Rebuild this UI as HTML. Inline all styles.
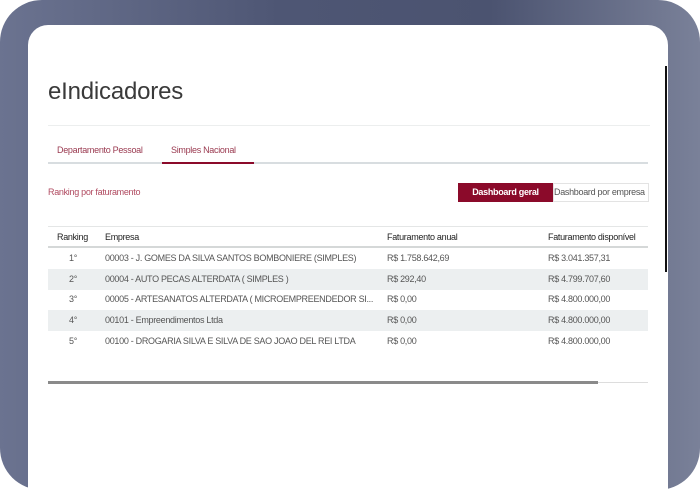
<!DOCTYPE html>
<html><head><style>
*{margin:0;padding:0;box-sizing:border-box}
html,body{width:700px;height:490px;overflow:hidden}
body{background:#fff;font-family:"Liberation Sans",sans-serif;position:relative}
.wrap{position:absolute;left:0;top:0;width:700px;height:490px;overflow:hidden}
.frame{position:absolute;left:0;top:0;width:700px;height:490px;border-radius:42px;background:linear-gradient(90deg,#6b7390 0%,#4e5674 40%,#4b5370 70%,#7a8199 100%)}
.card{position:absolute;left:28px;top:25px;width:640px;height:465px;background:#fff;border-radius:20px 20px 0 0}
.edge{position:absolute;left:665px;top:66px;width:2px;height:206px;background:#111}
.abs{position:absolute;white-space:nowrap;letter-spacing:-0.3px}
h1{position:absolute;left:48px;top:78px;font-size:24px;font-weight:normal;color:#3a3a3a;letter-spacing:-0.2px}
.sep{position:absolute;left:48px;top:125px;width:602px;height:1px;background:#eceeee}
.tab{font-size:9px;color:#9a3a50;top:145px}
.tabline{position:absolute;left:48px;top:162px;width:600px;height:2px;background:#d8dde0}
.tabact{position:absolute;left:162px;top:162px;width:92px;height:2px;background:#8b0a2a}
.btn1{position:absolute;left:458px;top:183px;width:95px;height:19px;background:#8b0a2a;color:#fff;font-size:9px;font-weight:bold;text-align:center;line-height:19px;letter-spacing:-0.3px}
.btn2{position:absolute;left:553px;top:183px;width:96px;height:19px;border:1px solid #e3e3e3;color:#555;font-size:9px;line-height:17px;overflow:hidden;white-space:nowrap;letter-spacing:-0.3px}
.t{font-size:9px;color:#555}
.h{font-size:9px;color:#222}
.row{position:absolute;left:48px;width:600px;height:21px;background:#eceff0}
.line{position:absolute;left:48px;width:600px}
</style></head><body><div class="wrap">
<div class="frame"></div>
<div class="card"></div>
<div class="edge"></div>
<h1>eIndicadores</h1>
<div class="sep"></div>
<div class="abs tab" style="left:57px">Departamento Pessoal</div>
<div class="abs tab" style="left:171px">Simples Nacional</div>
<div class="tabline"></div><div class="tabact"></div>
<div class="abs" style="left:48px;top:187px;font-size:9px;color:#b04a60">Ranking por faturamento</div>
<div class="btn1">Dashboard geral</div>
<div class="btn2">Dashboard por empresa</div>
<div class="line" style="top:226px;height:1px;background:#e4e6e6"></div>
<div class="abs h" style="left:57px;top:232px">Ranking</div>
<div class="abs h" style="left:105px;top:232px">Empresa</div>
<div class="abs h" style="left:387px;top:232px">Faturamento anual</div>
<div class="abs h" style="left:548px;top:232px">Faturamento disponível</div>
<div class="line" style="top:246px;height:2px;background:#d5d8d8"></div>
<div class="row" style="top:269px"></div>
<div class="row" style="top:310px"></div>
<div class="abs t" style="left:69px;top:253px">1°</div>
<div class="abs t" style="left:105px;top:253px">00003 - J. GOMES DA SILVA SANTOS BOMBONIERE (SIMPLES)</div>
<div class="abs t" style="left:387px;top:253px">R$ 1.758.642,69</div>
<div class="abs t" style="left:548px;top:253px">R$ 3.041.357,31</div>
<div class="abs t" style="left:69px;top:274px">2°</div>
<div class="abs t" style="left:105px;top:274px">00004 - AUTO PECAS ALTERDATA ( SIMPLES )</div>
<div class="abs t" style="left:387px;top:274px">R$ 292,40</div>
<div class="abs t" style="left:548px;top:274px">R$ 4.799.707,60</div>
<div class="abs t" style="left:69px;top:294px">3°</div>
<div class="abs t" style="left:105px;top:294px">00005 - ARTESANATOS ALTERDATA ( MICROEMPREENDEDOR SI...</div>
<div class="abs t" style="left:387px;top:294px">R$ 0,00</div>
<div class="abs t" style="left:548px;top:294px">R$ 4.800.000,00</div>
<div class="abs t" style="left:69px;top:315px">4°</div>
<div class="abs t" style="left:105px;top:315px">00101 - Empreendimentos Ltda</div>
<div class="abs t" style="left:387px;top:315px">R$ 0,00</div>
<div class="abs t" style="left:548px;top:315px">R$ 4.800.000,00</div>
<div class="abs t" style="left:69px;top:336px">5°</div>
<div class="abs t" style="left:105px;top:336px">00100 - DROGARIA SILVA E SILVA DE SAO JOAO DEL REI LTDA</div>
<div class="abs t" style="left:387px;top:336px">R$ 0,00</div>
<div class="abs t" style="left:548px;top:336px">R$ 4.800.000,00</div>
<div class="line" style="top:382px;height:1px;background:#ddd"></div>
<div class="abs" style="left:48px;top:381px;width:550px;height:3px;background:#8a8a8a"></div>
</div></body></html>
